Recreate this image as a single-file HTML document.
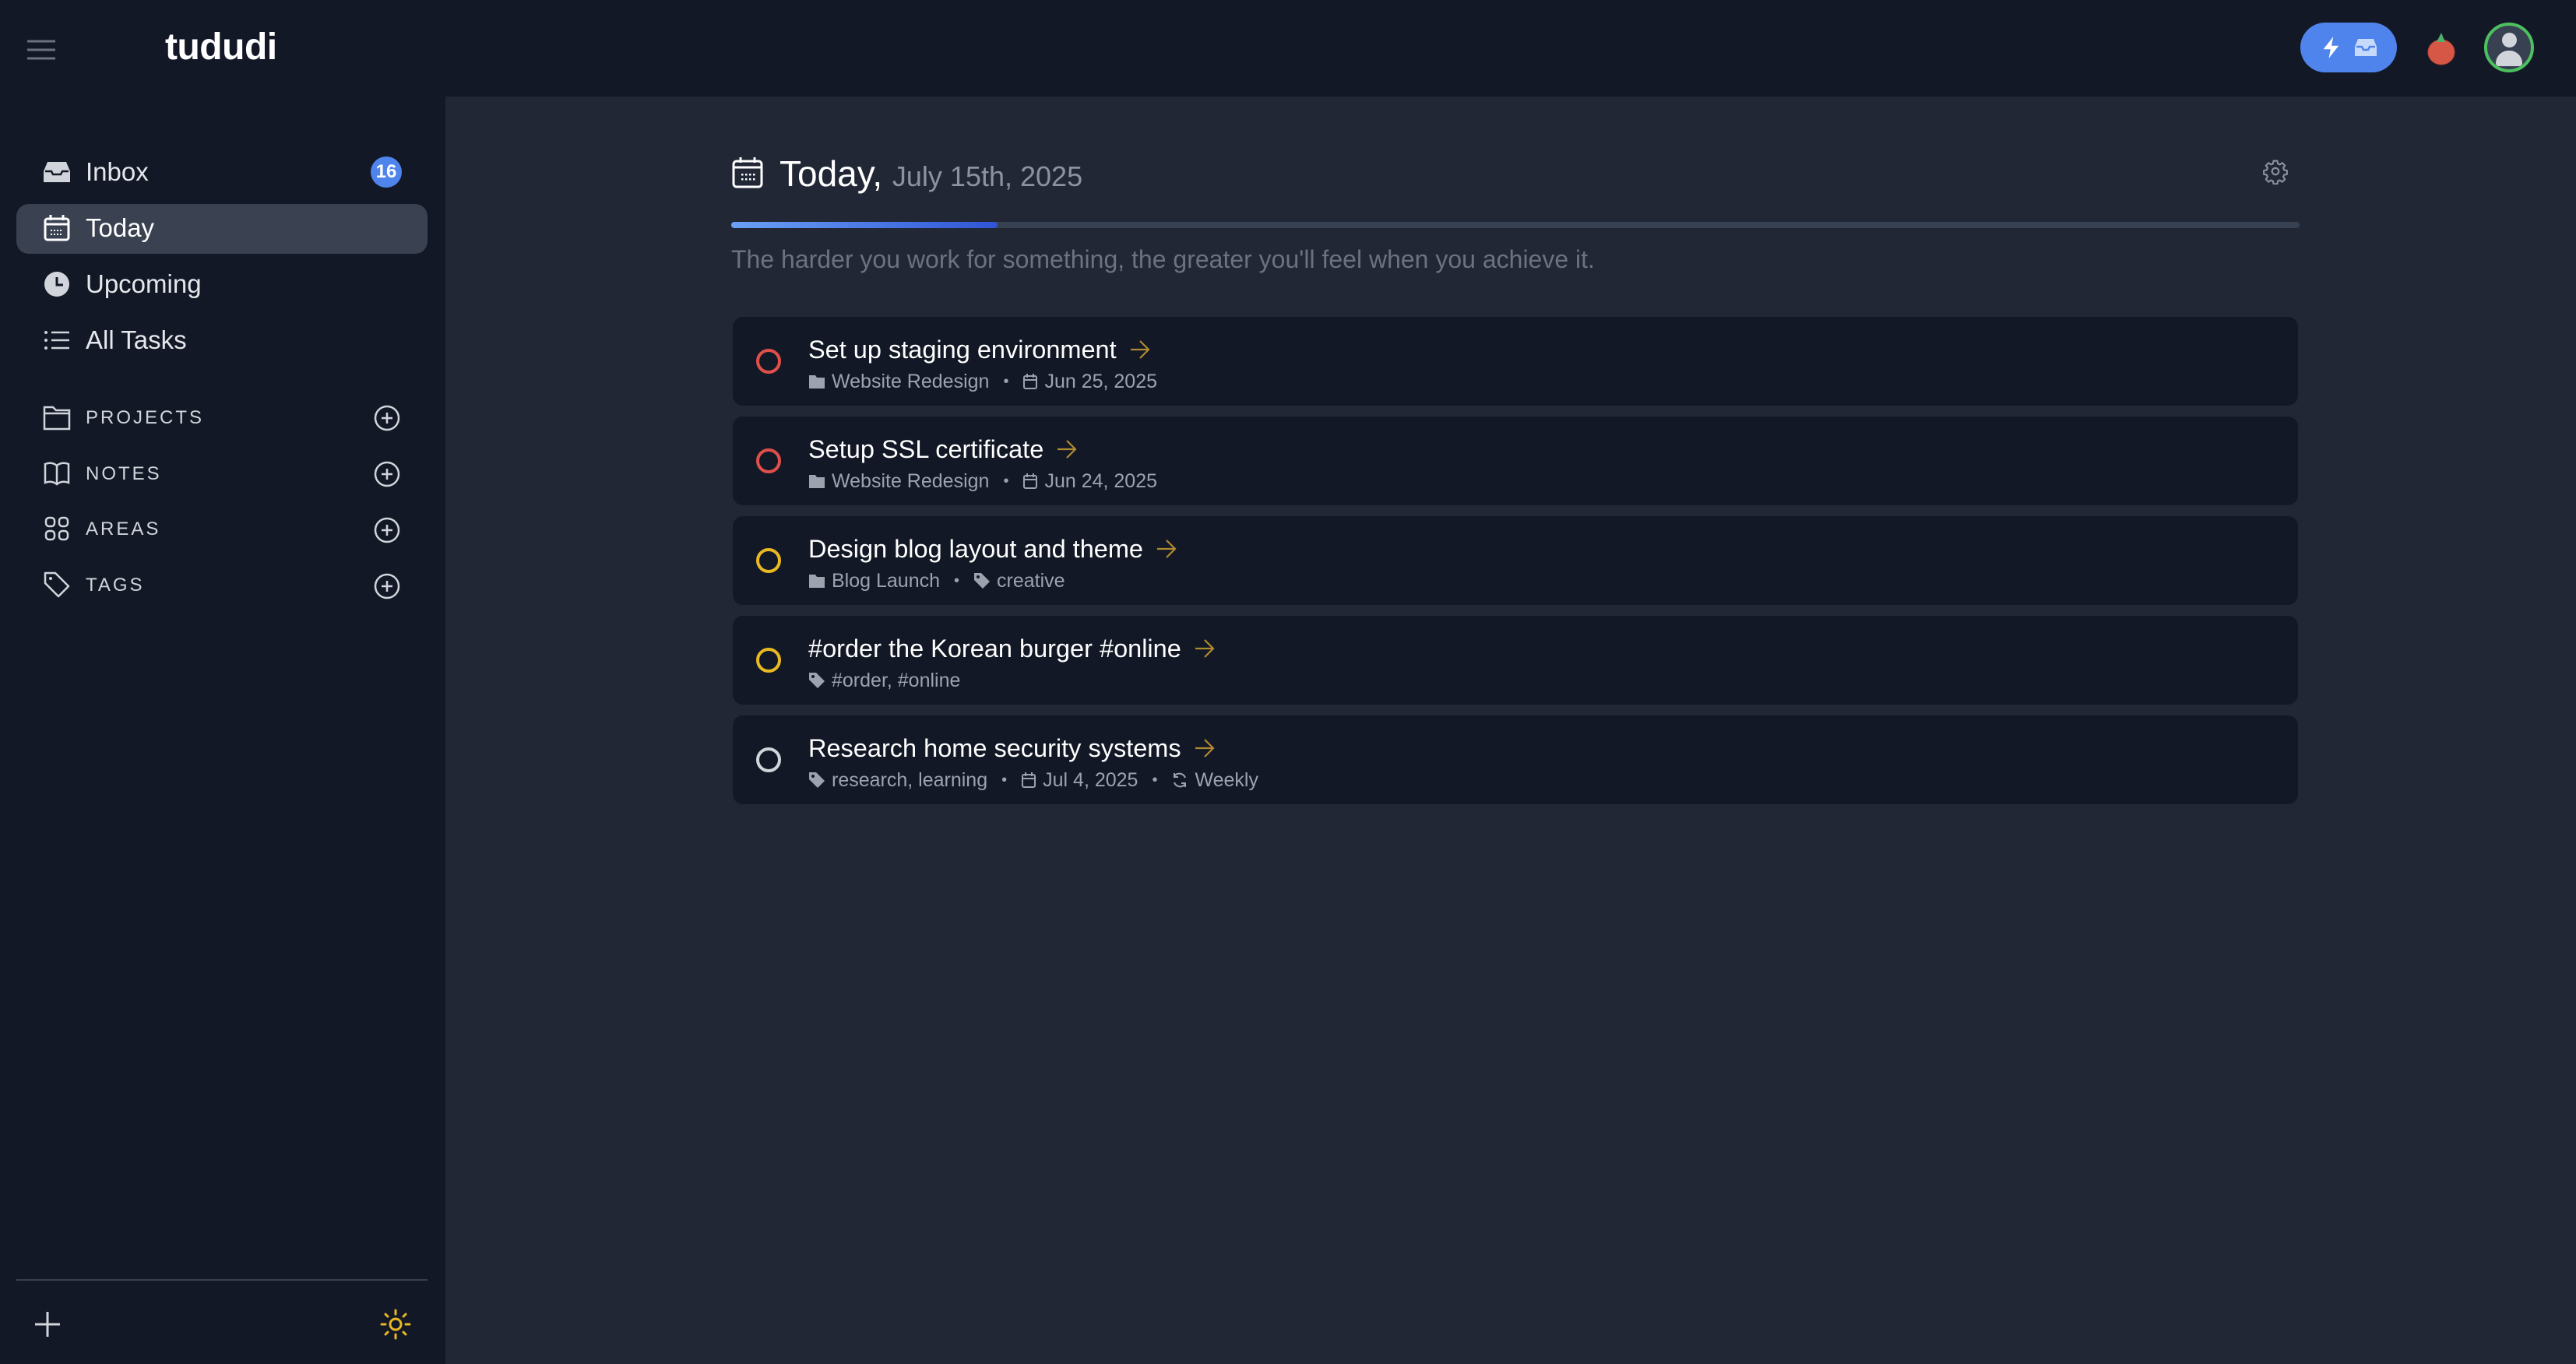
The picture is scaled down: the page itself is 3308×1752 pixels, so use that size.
<!DOCTYPE html>
<html><head><meta charset="utf-8">
<style>
*{margin:0;padding:0;box-sizing:border-box}
body{width:3308px;height:1752px;background:#222735;font-family:"Liberation Sans",sans-serif;position:relative;overflow:hidden;color:#fff}
.abs{position:absolute}
#hdr{left:0;top:0;width:3308px;height:124px;background:#131826}
#side{left:0;top:124px;width:572px;height:1628px;background:#131826}
.nav{position:absolute;left:110px;font-size:33px;color:#e5e7eb;line-height:40px}
.sec{position:absolute;left:110px;font-size:24px;letter-spacing:3px;color:#d1d5db;line-height:30px}
.ico{position:absolute}
.card{position:absolute;left:941px;width:2010px;height:114px;background:#131826;border-radius:13px}
.card .c{position:absolute;left:30px;top:41px;width:32px;height:32px;border-radius:50%;border:4px solid}
.card .t{position:absolute;left:97px;top:22px;font-size:32.5px;line-height:40px;color:#fff;white-space:nowrap;display:flex;align-items:center}
.card .t svg{margin-left:16px}
.card .m{position:absolute;left:97px;top:68px;font-size:25px;line-height:30px;color:#9ca3af;white-space:nowrap;display:flex;align-items:center}
.m svg{margin-right:8px}
.dot{margin:0 18px;font-size:20px}
</style></head><body>
<div id="hdr" class="abs"></div>
<div id="side" class="abs"></div>
<svg class="ico" style="left:34px;top:50px" width="38" height="28" viewBox="0 0 38 28"><g stroke="#6b7280" stroke-width="3"><line x1="1" y1="3" x2="37" y2="3"/><line x1="1" y1="14" x2="37" y2="14"/><line x1="1" y1="25" x2="37" y2="25"/></g></svg>
<div class="abs" style="left:212px;top:34px;font-size:48px;font-weight:bold;line-height:54px;letter-spacing:-0.5px">tududi</div>
<div class="abs" style="left:2954px;top:29px;width:124px;height:64px;border-radius:32px;background:#4f84ec"></div>
<svg class="ico" style="left:2980px;top:46px" width="28" height="30" viewBox="0 0 24 26"><path d="M14 1L3 15h8l-2 10 11-14h-8z" fill="#fff"/></svg>
<svg class="ico" style="left:3023px;top:48px" width="30" height="26" viewBox="0 0 30 26"><path d="M5 2h20l4 10v12H1V12z" fill="#c7dafc"/><path d="M3 12h7l2 4h6l2-4h7" stroke="#4f84ec" stroke-width="2.5" fill="none"/></svg>
<svg class="ico" style="left:3116px;top:40px" width="38" height="44" viewBox="0 0 38 44"><ellipse cx="19" cy="27" rx="17" ry="16" fill="#d65745" stroke="#b8443a" stroke-width="1"/><path d="M13 14l6-12 5 12z" fill="#4fb06a"/></svg>
<div class="abs" style="left:3190px;top:29px;width:64px;height:64px;border-radius:50%;border:4px solid #4cc05f;background:#374151;overflow:hidden">
<div class="abs" style="left:19px;top:9px;width:19px;height:19px;border-radius:50%;background:#d1d5db"></div>
<div class="abs" style="left:11px;top:32px;width:34px;height:20px;border-radius:17px 17px 4px 4px;background:#d1d5db"></div></div>

<div class="abs" style="left:21px;top:262px;width:528px;height:64px;border-radius:16px;background:#3a4150"></div>
<svg class="ico" style="left:55px;top:206px" width="36" height="30" viewBox="0 0 36 30"><path d="M6 2h24l5 12v14H1V14z" fill="#d1d5db"/><path d="M3 14h8l2 4h10l2-4h8" stroke="#131826" stroke-width="2.5" fill="none"/></svg>
<div class="nav" style="top:201px">Inbox</div>
<div class="abs" style="left:476px;top:201px;width:40px;height:40px;border-radius:20px;background:#4f84ec;font-size:24px;font-weight:bold;text-align:center;line-height:40px">16</div>
<svg class="ico" style="left:56px;top:275px" width="34" height="36" viewBox="0 0 34 36"><rect x="2" y="6" width="30" height="27" rx="3" fill="none" stroke="#fff" stroke-width="3"/><line x1="2" y1="13" x2="32" y2="13" stroke="#fff" stroke-width="3"/><line x1="9" y1="1" x2="9" y2="8" stroke="#fff" stroke-width="3"/><line x1="25" y1="1" x2="25" y2="8" stroke="#fff" stroke-width="3"/><g fill="#fff"><rect x="9" y="20" width="2" height="2"/><rect x="13" y="20" width="2" height="2"/><rect x="17" y="20" width="2" height="2"/><rect x="21" y="20" width="2" height="2"/><rect x="9" y="25" width="2" height="2"/><rect x="13" y="25" width="2" height="2"/><rect x="17" y="25" width="2" height="2"/><rect x="21" y="25" width="2" height="2"/></g></svg>
<div class="nav" style="top:273px;color:#fff">Today</div>
<svg class="ico" style="left:56px;top:348px" width="34" height="34" viewBox="0 0 34 34"><circle cx="17" cy="17" r="16" fill="#d1d5db"/><path d="M17 8v10h8" stroke="#131826" stroke-width="3" fill="none"/></svg>
<div class="nav" style="top:345px">Upcoming</div>
<svg class="ico" style="left:56px;top:422px" width="34" height="30" viewBox="0 0 34 30"><g fill="#d1d5db"><circle cx="3" cy="5" r="2"/><circle cx="3" cy="15" r="2"/><circle cx="3" cy="25" r="2"/></g><g stroke="#d1d5db" stroke-width="2.5"><line x1="10" y1="5" x2="33" y2="5"/><line x1="10" y1="15" x2="33" y2="15"/><line x1="10" y1="25" x2="33" y2="25"/></g></svg>
<div class="nav" style="top:417px">All Tasks</div>

<svg class="ico" style="left:55px;top:519px" width="36" height="34" viewBox="0 0 36 34"><path d="M2 4h11l4 4h17v24H2z M2 12h32" fill="none" stroke="#d1d5db" stroke-width="2.5"/></svg>
<div class="sec" style="top:522px">PROJECTS</div>
<svg class="ico" style="left:56px;top:592px" width="34" height="32" viewBox="0 0 34 32"><path d="M2 4c5-2 10-2 15 2c5-4 10-4 15-2v24c-5-2-10-2-15 2c-5-4-10-4-15-2z M17 6v24" fill="none" stroke="#d1d5db" stroke-width="2.5"/></svg>
<div class="sec" style="top:594px">NOTES</div>
<svg class="ico" style="left:57px;top:663px" width="32" height="32" viewBox="0 0 32 32"><g fill="none" stroke="#d1d5db" stroke-width="2.5"><rect x="2" y="2" width="11" height="11" rx="4"/><rect x="19" y="2" width="11" height="11" rx="4"/><rect x="2" y="19" width="11" height="11" rx="4"/><rect x="19" y="19" width="11" height="11" rx="4"/></g></svg>
<div class="sec" style="top:665px">AREAS</div>
<svg class="ico" style="left:55px;top:733px" width="36" height="36" viewBox="0 0 36 36"><path d="M3 3h13l17 17-13 13L3 16z" fill="none" stroke="#d1d5db" stroke-width="2.5" stroke-linejoin="round"/><circle cx="10" cy="10" r="2" fill="#d1d5db"/></svg>
<div class="sec" style="top:737px">TAGS</div>
<svg class="ico" style="left:480px;top:520px" width="34" height="250" viewBox="0 0 34 250"><g fill="none" stroke="#d1d5db" stroke-width="2.5"><circle cx="17" cy="17" r="15"/><path d="M17 10v14M10 17h14"/><circle cx="17" cy="89" r="15"/><path d="M17 82v14M10 89h14"/><circle cx="17" cy="161" r="15"/><path d="M17 154v14M10 161h14"/><circle cx="17" cy="233" r="15"/><path d="M17 226v14M10 233h14"/></g></svg>

<div class="abs" style="left:21px;top:1643px;width:528px;height:2px;background:#374151"></div>
<svg class="ico" style="left:44px;top:1684px" width="34" height="34" viewBox="0 0 34 34"><path d="M17 1v32M1 17h32" stroke="#d1d5db" stroke-width="3"/></svg>
<svg class="ico" style="left:488px;top:1681px" width="40" height="40" viewBox="0 0 40 40"><g stroke="#e8b923" stroke-width="3" fill="none" stroke-linecap="round"><circle cx="20" cy="20" r="7"/><path d="M20 2v5M20 33v5M2 20h5M33 20h5M7 7l3 3M30 30l3 3M7 33l3-3M30 10l3-3"/></g></svg>

<svg class="ico" style="left:940px;top:201px" width="42" height="42" viewBox="0 0 42 42"><rect x="2" y="6" width="36" height="33" rx="4" fill="none" stroke="#fff" stroke-width="3"/><line x1="2" y1="14" x2="38" y2="14" stroke="#fff" stroke-width="3"/><line x1="11" y1="1" x2="11" y2="8" stroke="#fff" stroke-width="3"/><line x1="29" y1="1" x2="29" y2="8" stroke="#fff" stroke-width="3"/><g fill="#fff"><rect x="12" y="22" width="2.5" height="2.5"/><rect x="17" y="22" width="2.5" height="2.5"/><rect x="22" y="22" width="2.5" height="2.5"/><rect x="27" y="22" width="2.5" height="2.5"/><rect x="12" y="28" width="2.5" height="2.5"/><rect x="17" y="28" width="2.5" height="2.5"/><rect x="22" y="28" width="2.5" height="2.5"/><rect x="27" y="28" width="2.5" height="2.5"/></g></svg>
<div class="abs" style="left:1001px;top:195px;font-size:46px;line-height:56px;white-space:nowrap">Today, <span style="font-size:36px;color:#8b93a1">July 15th, 2025</span></div>
<svg class="ico" style="left:2905px;top:203px" width="34" height="34" viewBox="0 0 24 24"><path d="M10.3 2.5h3.4l.5 2.6 1.8.8 2.2-1.5 2.4 2.4-1.5 2.2.8 1.8 2.6.5v3.4l-2.6.5-.8 1.8 1.5 2.2-2.4 2.4-2.2-1.5-1.8.8-.5 2.6h-3.4l-.5-2.6-1.8-.8-2.200 1.5-2.4-2.4 1.5-2.2-.8-1.8-2.6-.5v-3.4l2.6-.5.8-1.8-1.5-2.2 2.4-2.4 2.2 1.5 1.8-.8z" fill="none" stroke="#8b93a1" stroke-width="1.5" stroke-linejoin="round"/><circle cx="12" cy="12" r="3" fill="none" stroke="#8b93a1" stroke-width="1.5"/></svg>
<div class="abs" style="left:939px;top:285px;width:2014px;height:8px;border-radius:4px;background:#374151"></div>
<div class="abs" style="left:939px;top:285px;width:342px;height:8px;border-radius:4px;background:linear-gradient(90deg,#6aa0f5,#2f55d6)"></div>
<div class="abs" style="left:939px;top:313px;font-size:32px;line-height:40px;color:#6b7280;white-space:nowrap">The harder you work for something, the greater you'll feel when you achieve it.</div>

<div class="card" style="top:407px"><div class="c" style="border-color:#e0504a"></div>
<div class="t">Set up staging environment<svg width="28" height="26" viewBox="0 0 28 26"><path d="M2 13h23M14 2l11 11-11 11" fill="none" stroke="#b08a2e" stroke-width="2.2"/></svg></div>
<div class="m"><svg width="22" height="20" viewBox="0 0 22 20"><path d="M1 2h8l2 3h10v14H1z" fill="#9ca3af"/></svg>Website Redesign<span class="dot">•</span><svg width="20" height="22" viewBox="0 0 20 22"><rect x="2" y="4" width="16" height="16" rx="2" fill="none" stroke="#9ca3af" stroke-width="2"/><path d="M6 1v5M14 1v5M2 9h16" stroke="#9ca3af" stroke-width="2"/></svg>Jun 25, 2025</div></div>

<div class="card" style="top:535px"><div class="c" style="border-color:#e0504a"></div>
<div class="t">Setup SSL certificate<svg width="28" height="26" viewBox="0 0 28 26"><path d="M2 13h23M14 2l11 11-11 11" fill="none" stroke="#b08a2e" stroke-width="2.2"/></svg></div>
<div class="m"><svg width="22" height="20" viewBox="0 0 22 20"><path d="M1 2h8l2 3h10v14H1z" fill="#9ca3af"/></svg>Website Redesign<span class="dot">•</span><svg width="20" height="22" viewBox="0 0 20 22"><rect x="2" y="4" width="16" height="16" rx="2" fill="none" stroke="#9ca3af" stroke-width="2"/><path d="M6 1v5M14 1v5M2 9h16" stroke="#9ca3af" stroke-width="2"/></svg>Jun 24, 2025</div></div>

<div class="card" style="top:663px"><div class="c" style="border-color:#e8b923"></div>
<div class="t">Design blog layout and theme<svg width="28" height="26" viewBox="0 0 28 26"><path d="M2 13h23M14 2l11 11-11 11" fill="none" stroke="#b08a2e" stroke-width="2.2"/></svg></div>
<div class="m"><svg width="22" height="20" viewBox="0 0 22 20"><path d="M1 2h8l2 3h10v14H1z" fill="#9ca3af"/></svg>Blog Launch<span class="dot">•</span><svg width="22" height="22" viewBox="0 0 22 22"><path d="M1 1h9l11 11-9 9L1 10z" fill="#9ca3af"/><circle cx="6" cy="6" r="2" fill="#131826"/></svg>creative</div></div>

<div class="card" style="top:791px"><div class="c" style="border-color:#e8b923"></div>
<div class="t">#order the Korean burger #online<svg width="28" height="26" viewBox="0 0 28 26"><path d="M2 13h23M14 2l11 11-11 11" fill="none" stroke="#b08a2e" stroke-width="2.2"/></svg></div>
<div class="m"><svg width="22" height="22" viewBox="0 0 22 22"><path d="M1 1h9l11 11-9 9L1 10z" fill="#9ca3af"/><circle cx="6" cy="6" r="2" fill="#131826"/></svg>#order, #online</div></div>

<div class="card" style="top:919px"><div class="c" style="border-color:#d1d5db"></div>
<div class="t">Research home security systems<svg width="28" height="26" viewBox="0 0 28 26"><path d="M2 13h23M14 2l11 11-11 11" fill="none" stroke="#b08a2e" stroke-width="2.2"/></svg></div>
<div class="m"><svg width="22" height="22" viewBox="0 0 22 22"><path d="M1 1h9l11 11-9 9L1 10z" fill="#9ca3af"/><circle cx="6" cy="6" r="2" fill="#131826"/></svg>research, learning<span class="dot">•</span><svg width="20" height="22" viewBox="0 0 20 22"><rect x="2" y="4" width="16" height="16" rx="2" fill="none" stroke="#9ca3af" stroke-width="2"/><path d="M6 1v5M14 1v5M2 9h16" stroke="#9ca3af" stroke-width="2"/></svg>Jul 4, 2025<span class="dot">•</span><svg width="22" height="22" viewBox="0 0 22 22"><path d="M18 8a8 8 0 0 0-14-2M4 14a8 8 0 0 0 14 2M4 2v5h5M18 20v-5h-5" fill="none" stroke="#9ca3af" stroke-width="2"/></svg>Weekly</div></div>
</body></html>
